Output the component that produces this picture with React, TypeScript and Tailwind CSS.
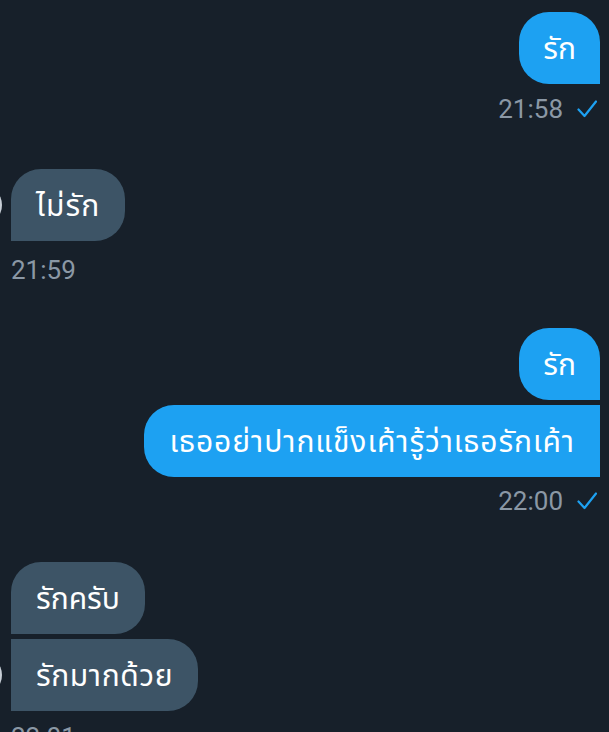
import React from "react";

const font = { fontFamily: "Roboto, 'Noto Sans Thai', 'Noto Sans', 'Noto Sans CJK SC', sans-serif" };

function Check() {
  return (
    <svg width="20" height="20" viewBox="0 0 20 20" className="ml-[14px]">
      <polyline points="1.5,10.5 7.5,17 19,2.5" fill="none" stroke="#1da1f2" strokeWidth="2.2" strokeLinecap="round" strokeLinejoin="round" />
    </svg>
  );
}

function Time({ t, sent, className }: { t: string; sent?: boolean; className: string }) {
  return (
    <div className={`flex items-center h-[30px] ${className} ${sent ? "justify-end pr-[3px]" : "justify-start"}`}>
      <span className="text-[26px] leading-[30px] text-[#8b98a5]">{t}</span>
      {sent && <Check />}
    </div>
  );
}

function Avatar() {
  return <div className="absolute left-[-49px] top-1/2 -translate-y-1/2 w-10 h-10 rounded-full bg-[#c7ced6]" />;
}

export default function App() {
  return (
    <div className="w-[609px] h-[732px] overflow-hidden bg-[#17202a] pt-3" style={font}>
      {/* sent group 1 */}
      <div className="flex flex-col items-end pr-[9px]">
        <div className="h-[72px] flex items-center px-[24px] bg-[#1da1f2] text-white text-[30px] rounded-[30px] rounded-br-none">รัก</div>
      </div>
      <Time t="21:58" sent className="mt-[10px] pr-[12px]" />

      {/* received 1 */}
      <div className="mt-[45px] pl-[11px] flex flex-col items-start">
        <div className="relative h-[72px] flex items-center px-[25px] bg-[#3d5466] text-white text-[30px] tracking-[1px] rounded-[30px] rounded-bl-none">
          <Avatar />
          ไม่รัก
        </div>
      </div>
      <div className="pl-[11px]">
        <Time t="21:59" className="mt-[14px]" />
      </div>

      {/* sent group 2 */}
      <div className="mt-[43px] flex flex-col items-end gap-[5px] pr-[9px]">
        <div className="h-[72px] flex items-center px-[24px] bg-[#1da1f2] text-white text-[30px] rounded-[30px] rounded-br-none">รัก</div>
        <div className="h-[72px] flex items-center px-[25px] bg-[#1da1f2] text-white text-[30px] tracking-[0.95px] rounded-l-[30px]">
          เธออย่าปากแข็งเค้ารู้ว่าเธอรักเค้า
        </div>
      </div>
      <Time t="22:00" sent className="mt-[9px] pr-[12px]" />

      {/* received group 2 */}
      <div className="mt-[46px] pl-[11px] flex flex-col items-start gap-[5px]">
        <div className="h-[72px] flex items-center px-[25px] bg-[#3d5466] text-white text-[30px] rounded-[30px] rounded-bl-none">รักครับ</div>
        <div className="relative h-[72px] flex items-center px-[25px] bg-[#3d5466] text-white text-[30px] tracking-[0.6px] rounded-r-[30px]">
          <Avatar />
          รักมากด้วย
        </div>
      </div>
      <div className="pl-[11px]">
        <Time t="22:01" className="mt-[11px]" />
      </div>
    </div>
  );
}
